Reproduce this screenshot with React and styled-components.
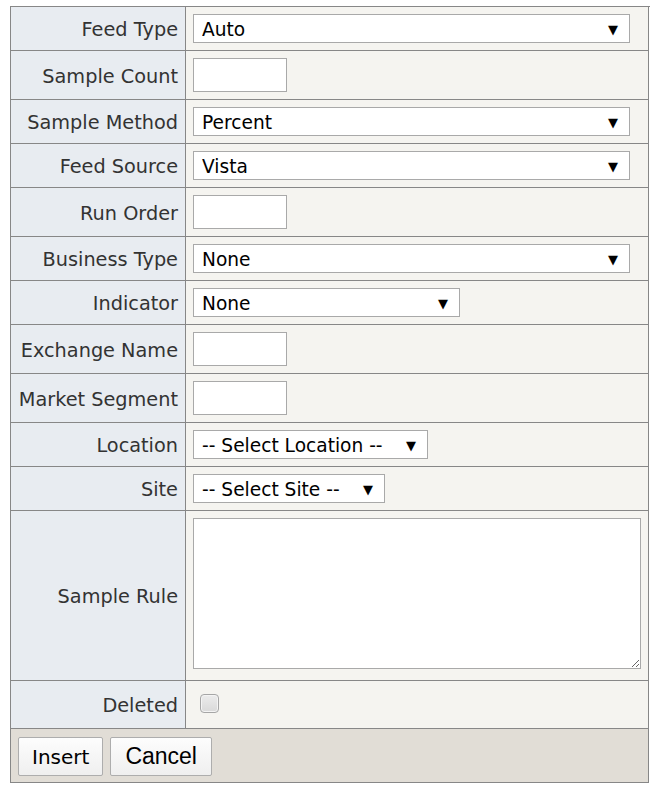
import { useState } from 'react';
import styled, { createGlobalStyle } from 'styled-components';

const GlobalStyle = createGlobalStyle`
    body {
        margin: 0;
        background: #fff;
        font-family: "DejaVu Sans", Verdana, sans-serif;
    }
`

const Page = styled.div`
    padding: 6px 0 0 10px;
`

const FormGrid = styled.div`
    display: grid;
    grid-template-columns: 175px 463px;
    width: 639px;
    border-top: 1px solid #878787;
    border-left: 1px solid #878787;
`

// row height = h + bottom border
const Label = styled.div`
    display: flex;
    align-items: center;
    justify-content: flex-end;
    min-height: ${props => props.h - 2}px;
    padding: 2px 7px 0 0;
    background: #e8ecf1;
    border-right: 1px solid #878787;
    border-bottom: 1px solid #878787;
    font-size: 19.3px;
    color: #333;
    white-space: nowrap;
`

const Value = styled.div`
    display: flex;
    align-items: ${props => props.top ? 'flex-start' : 'center'};
    min-height: ${props => props.h}px;
    padding: ${props => props.top ? '7px 7px 0' : '0 7px'};
    background: #f5f4f0;
    border-right: 1px solid #878787;
    border-bottom: 1px solid #878787;
    box-sizing: border-box;
`

const SelectWrap = styled.div`
    position: relative;
    width: ${props => props.w}px;
    height: 29px;
`

const Select = styled.select`
    appearance: none;
    -webkit-appearance: none;
    width: 100%;
    height: 100%;
    box-sizing: border-box;
    margin: 0;
    padding: 2px 30px 0 8px;
    border: 1px solid #a9a9a9;
    border-radius: 0;
    background: #fff;
    font-family: "DejaVu Sans", Verdana, sans-serif;
    font-size: 18.6px;
    color: #000;
`

const Arrow = styled.span`
    position: absolute;
    right: 12px;
    top: 50%;
    transform: translateY(-50%);
    font-size: 13px;
    line-height: 1;
    color: #000;
    pointer-events: none;
`

const TextInput = styled.input`
    width: 94px;
    height: 34px;
    box-sizing: border-box;
    margin: 0;
    border: 1px solid #a9a9a9;
    background: #fff;
    font-family: "DejaVu Sans", Verdana, sans-serif;
    font-size: 18px;
`

const TextArea = styled.textarea`
    display: block;
    width: 448px;
    height: 151px;
    box-sizing: border-box;
    margin: 0;
    border: 1px solid #a9a9a9;
    background: #fff;
    font-family: "DejaVu Sans", Verdana, sans-serif;
    font-size: 16px;
`

const Check = styled.input`
    appearance: none;
    -webkit-appearance: none;
    width: 19px;
    height: 19px;
    margin: 0 0 2px 7px;
    border: 1px solid #a6a6a6;
    border-radius: 4px;
    background: linear-gradient(#ececec, #d9d9d9);
    box-shadow: inset 0 0 0 1px #f4f4f4;

    :checked {
        background: linear-gradient(#d4d4d4, #c4c4c4);
    }
`

const Footer = styled.div`
    grid-column: span 2;
    display: flex;
    gap: 7px;
    height: 54px;
    box-sizing: border-box;
    padding: 8px 7px 0;
    background: #e1ddd6;
    border-right: 1px solid #878787;
    border-bottom: 1px solid #878787;
`

const Button = styled.button`
    height: ${props => props.h || 39}px;
    padding: 0 ${props => props.px}px;
    border: 1px solid #adadad;
    border-radius: 2px;
    background: linear-gradient(#fdfdfd, #efefef);
    font-family: ${props => props.arial ? '"Liberation Sans", Arial, sans-serif' : '"DejaVu Sans", Verdana, sans-serif'};
    font-size: ${props => props.fs}px;
    color: #000;
    cursor: pointer;
`

const Dropdown = ({ width, value, options }) => (
    <SelectWrap w={width}>
        <Select defaultValue={value}>
            {options.map(o => <option key={o} value={o}>{o}</option>)}
        </Select>
        <Arrow>▼</Arrow>
    </SelectWrap>
)

const App = () => {
    const [deleted, setDeleted] = useState(false);

    return (
        <Page>
            <GlobalStyle />
            <FormGrid>
                <Label h={43}>Feed Type</Label>
                <Value h={43}><Dropdown width={437} value="Auto" options={['Auto', 'Manual']} /></Value>

                <Label h={48}>Sample Count</Label>
                <Value h={48}><TextInput type="text" /></Value>

                <Label h={43}>Sample Method</Label>
                <Value h={43}><Dropdown width={437} value="Percent" options={['Percent', 'Count']} /></Value>

                <Label h={43}>Feed Source</Label>
                <Value h={43}><Dropdown width={437} value="Vista" options={['Vista', 'Other']} /></Value>

                <Label h={48}>Run Order</Label>
                <Value h={48}><TextInput type="text" /></Value>

                <Label h={43}>Business Type</Label>
                <Value h={43}><Dropdown width={437} value="None" options={['None']} /></Value>

                <Label h={43}>Indicator</Label>
                <Value h={43}><Dropdown width={267} value="None" options={['None']} /></Value>

                <Label h={48}>Exchange Name</Label>
                <Value h={48}><TextInput type="text" /></Value>

                <Label h={48}>Market Segment</Label>
                <Value h={48}><TextInput type="text" /></Value>

                <Label h={43}>Location</Label>
                <Value h={43}><Dropdown width={235} value="-- Select Location --" options={['-- Select Location --']} /></Value>

                <Label h={43}>Site</Label>
                <Value h={43}><Dropdown width={192} value="-- Select Site --" options={['-- Select Site --']} /></Value>

                <Label h={169}>Sample Rule</Label>
                <Value h={169} top><TextArea /></Value>

                <Label h={47}>Deleted</Label>
                <Value h={47}><Check type="checkbox" checked={deleted} onChange={e => setDeleted(e.target.checked)} /></Value>

                <Footer>
                    <Button type="button" px={13} fs={20}>Insert</Button>
                    <Button type="button" px={14} fs={23} arial>Cancel</Button>
                </Footer>
            </FormGrid>
        </Page>
    )
}

export default App;
